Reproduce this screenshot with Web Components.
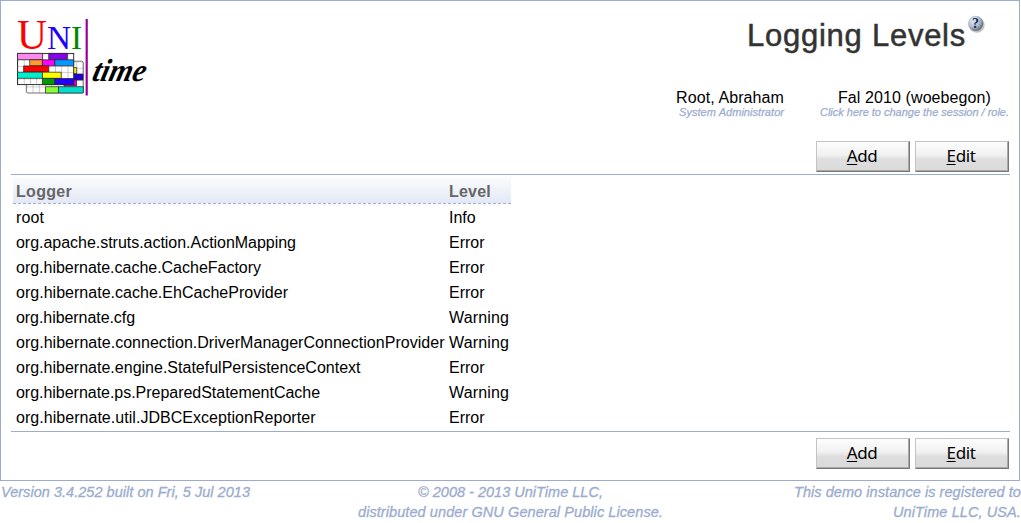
<!DOCTYPE html>
<html lang="en"><head><meta charset="utf-8"><title>Logging Levels</title>
<style>
html,body{margin:0;background:#fff;font-family:"Liberation Sans",Arial,sans-serif;font-size:16px;color:#000;overflow:hidden}
</style></head><body>
<unitime-page>
  <unitime-header slot="header"></unitime-header>
  <action-bar slot="top"></action-bar>
  <logger-table></logger-table>
  <action-bar slot="bottom"></action-bar>
  <page-footer slot="footer"></page-footer>
</unitime-page>
<script>
const define=(name,html,ready)=>customElements.define(name,class extends HTMLElement{
  constructor(){super();this.attachShadow({mode:'open'}).innerHTML=html;}
  connectedCallback(){if(ready)ready(this);}
});

/* Inline text tracked out or in so that it spans a given width. */
define('fit-text',`<style>:host{display:inline-block;white-space:nowrap}span{display:inline-block}</style><span><slot></slot></span>`,el=>{
  const s=el.shadowRoot.querySelector('span'),w=+el.getAttribute('width'),n=el.textContent.length;
  el.style.width=w+'px';
  s.style.letterSpacing='0px';
  s.style.letterSpacing=((w-s.getBoundingClientRect().width)/n)+'px';
});

define('unitime-logo',`<style>:host{display:block;width:140px;height:98px}svg{display:block}</style>
<svg width="140" height="98" viewBox="14 4 140 98">
<defs><pattern id="g" width="6.25" height="6.25" patternUnits="userSpaceOnUse" x="17.5" y="53.5"><path d="M0 0H6.25M0 0V6.25" stroke="#999" stroke-width="1"/></pattern>
<pattern id="h" width="6.25" height="6.25" patternUnits="userSpaceOnUse" x="26.3" y="61.5"><path d="M0 0H6.25M0 0V6.25" stroke="#999" stroke-width="1"/></pattern></defs>
<rect x="26.3" y="61.2" width="57" height="31.8" rx="1.5" fill="#fff"/><rect x="26.3" y="61.2" width="57" height="31.8" rx="1.5" fill="url(#h)" stroke="#666" stroke-width=".9"/>
<g stroke="#222" stroke-width=".7"><path fill="#ee0" d="M70 67.5h6.7v6H70z"/><path fill="#20d" d="M70 74h13v6H70z"/><path fill="#d0c" d="M64 80h12.5v6H64z"/><path fill="#8f3" d="M45.5 86.7h13V93h-13z"/><path fill="#0dc" d="M58.5 86.7h24.8V93H58.5z"/></g>
<rect x="17.5" y="53.4" width="56.2" height="31.2" fill="#fff"/><rect x="17.5" y="53.4" width="56.2" height="31.2" fill="url(#g)" stroke="#222" stroke-width=".9"/>
<g stroke="#222" stroke-width=".7"><path fill="#f8e" d="M17.5 53.4h25v6.2h-25z"/><path fill="#80e" d="M48.7 53.4h18.7v6.2H48.7z"/><path fill="#f93" d="M29.7 59.8h12.7v6H29.7z"/><path fill="#f0f" d="M42.4 59.8h12.5v6H42.4z"/><path fill="#09f" d="M54.9 59.8h18.8v6H54.9z"/><path fill="#f00" d="M23.6 65.9h25V72h-25z"/><path fill="#0ec" d="M17.5 72.2h25v6.1h-25z"/><path fill="#ff0" d="M42.4 72.2h18.8v6.1H42.4z"/><path fill="#090" d="M42.4 78.5h12.5v6.1H42.4z"/><path fill="#20f" d="M54.9 78.5h18.8v6.1H54.9z"/></g>
<path d="M86.7 19v76.5" stroke="#909" stroke-width="2.2"/>
<g font-family="Liberation Serif,serif"><text x="17" y="49" font-size="42" textLength="30" lengthAdjust="spacingAndGlyphs" fill="#f00">U</text><text x="47" y="49" font-size="33" textLength="24" lengthAdjust="spacingAndGlyphs" fill="#20f">N</text><text x="71" y="49" font-size="33" textLength="11" lengthAdjust="spacingAndGlyphs" fill="#080">I</text>
<text x="0" y="0" transform="translate(91 80.5) skewX(-14)" font-size="32" font-weight="bold" font-style="italic" textLength="53" lengthAdjust="spacingAndGlyphs">time</text></g></svg>`);

define('help-icon',`<style>:host{display:block;width:18px;height:18px}svg{display:block}</style>
<svg width="18" height="18"><defs><radialGradient id="r" cx=".36" cy=".33" r=".72"><stop stop-color="#e2eaf0"/><stop offset=".55" stop-color="#b3c0c8"/><stop offset="1" stop-color="#59646e"/></radialGradient></defs>
<circle cx="9.9" cy="9.9" r="7.8" fill="#666" opacity=".4"/><circle cx="8.6" cy="8.4" r="7.7" fill="url(#r)"/><text x="8.4" y="12.9" text-anchor="middle" font-family="Liberation Serif,serif" font-size="14" font-weight="bold" fill="#182868">?</text></svg>`);

define('unitime-header',`<style>
:host{display:flex;justify-content:space-between;height:133px}
unitime-logo{margin:3px 0 0 13px}
.right{display:flex;flex-direction:column;align-items:flex-end;padding-right:10px}
.title{display:flex;height:87px;margin-right:24px}
h1{margin:14px 1px 0 0;font-weight:400;font-size:31px;line-height:41px;color:#333;-webkit-text-stroke:.5px #333}
help-icon{margin:14px 0 0}
.who{display:flex;gap:36px;text-align:center}
.who div{display:flex;flex-direction:column;align-items:center}
.name{line-height:20px}small{font-size:11px;line-height:12px;margin-top:-2px;font-style:italic;color:#9bacce;-webkit-text-stroke:.25px #9bacce}
.role{margin-left:3px}
</style><unitime-logo></unitime-logo><div class="right"><div class="title"><h1><fit-text width="219">Logging Levels</fit-text></h1><help-icon></help-icon></div>
<div class="who"><div><fit-text class="name" width="108">Root, Abraham</fit-text><small class="role"><fit-text width="105">System Administrator</fit-text></small></div>
<div><fit-text class="name" width="153">Fal 2010 (woebegon)</fit-text><small><fit-text width="189">Click here to change the session / role.</fit-text></small></div></div></div>`);

define('action-button',`<style>:host{display:block}button{display:block;box-sizing:border-box;width:94px;height:31px;padding:0 2px 1px 0;border:1px solid;border-color:#c4c4c4 #777 #777 #c4c4c4;box-shadow:inset -1px -1px #aaa;background:linear-gradient(#fdfdfd,#f1f1f1 45%,#dedede 60%,#dadada);font:17px "Noto Sans",sans-serif;letter-spacing:-.4px;color:#000;line-height:26px}
::slotted(u){text-underline-offset:2px;text-decoration-thickness:1px}</style><button><slot></slot></button>`);

define('action-bar',`<style>:host{display:flex;justify-content:flex-end;gap:5px;padding-right:10px}</style><action-button><u>A</u>dd</action-button><action-button><u>E</u>dit</action-button>`);

const rows=[['root','Info',28],['org.apache.struts.action.ActionMapping','Error',280],['org.hibernate.cache.CacheFactory','Error',245],['org.hibernate.cache.EhCacheProvider','Error',272],['org.hibernate.cfg','Warning',119],['org.hibernate.connection.DriverManagerConnectionProvider','Warning',428.5],['org.hibernate.engine.StatefulPersistenceContext','Error',344.5],['org.hibernate.ps.PreparedStatementCache','Warning',304],['org.hibernate.util.JDBCExceptionReporter','Error',299.5]];
const levelWidth={Info:26.5,Error:35.5,Warning:60};
define('logger-table',`<style>
:host{display:block;margin:2px 9px 0 10px;border:solid #9bacce;border-width:1px 0;height:256px}
.row{display:grid;grid-template-columns:433px 1fr;width:495px;margin-left:2px;padding-left:3px;height:25px;line-height:25px}
.head{margin-top:2px;height:26px;line-height:30px;border-bottom:1px dashed #9bacce;background:linear-gradient(#fbfcfe,#e3e8f5);font-weight:bold;color:#666;margin-bottom:1px}
</style><div class="row head"><fit-text width="56">Logger</fit-text><fit-text width="42">Level</fit-text></div>${rows.map(r=>`<div class="row"><fit-text width="${r[2]}">${r[0]}</fit-text><fit-text width="${levelWidth[r[1]]}">${r[1]}</fit-text></div>`).join('')}`);

define('page-footer',`<style>:host{display:grid;grid-template-columns:1fr 1fr 1fr;width:1021px;line-height:20px;padding-top:1px;font-size:14.5px;font-style:italic;color:#9bacce;-webkit-text-stroke:.3px #9bacce}
div{display:flex;flex-direction:column}.c{align-items:center}.r{align-items:flex-end}.l{padding-left:1px}</style>
<div class="l"><fit-text width="249">Version 3.4.252 built on Fri, 5 Jul 2013</fit-text></div><div class="c"><fit-text width="185">© 2008 - 2013 UniTime LLC,</fit-text><fit-text width="305">distributed under GNU General Public License.</fit-text></div><div class="r"><fit-text width="227">This demo instance is registered to</fit-text><fit-text width="128">UniTime LLC, USA.</fit-text></div>`);

define('unitime-page',`<style>:host{display:block;width:1021px;height:523px}
main{box-sizing:border-box;width:1020px;height:481px;border:1px solid #9bacce}
slot{display:block}.top{margin-top:7px}.bottom{margin-top:6px}</style>
<main><slot name="header"></slot><slot class="top" name="top"></slot><slot></slot><slot class="bottom" name="bottom"></slot></main><slot name="footer"></slot>`);
</script></body></html>
